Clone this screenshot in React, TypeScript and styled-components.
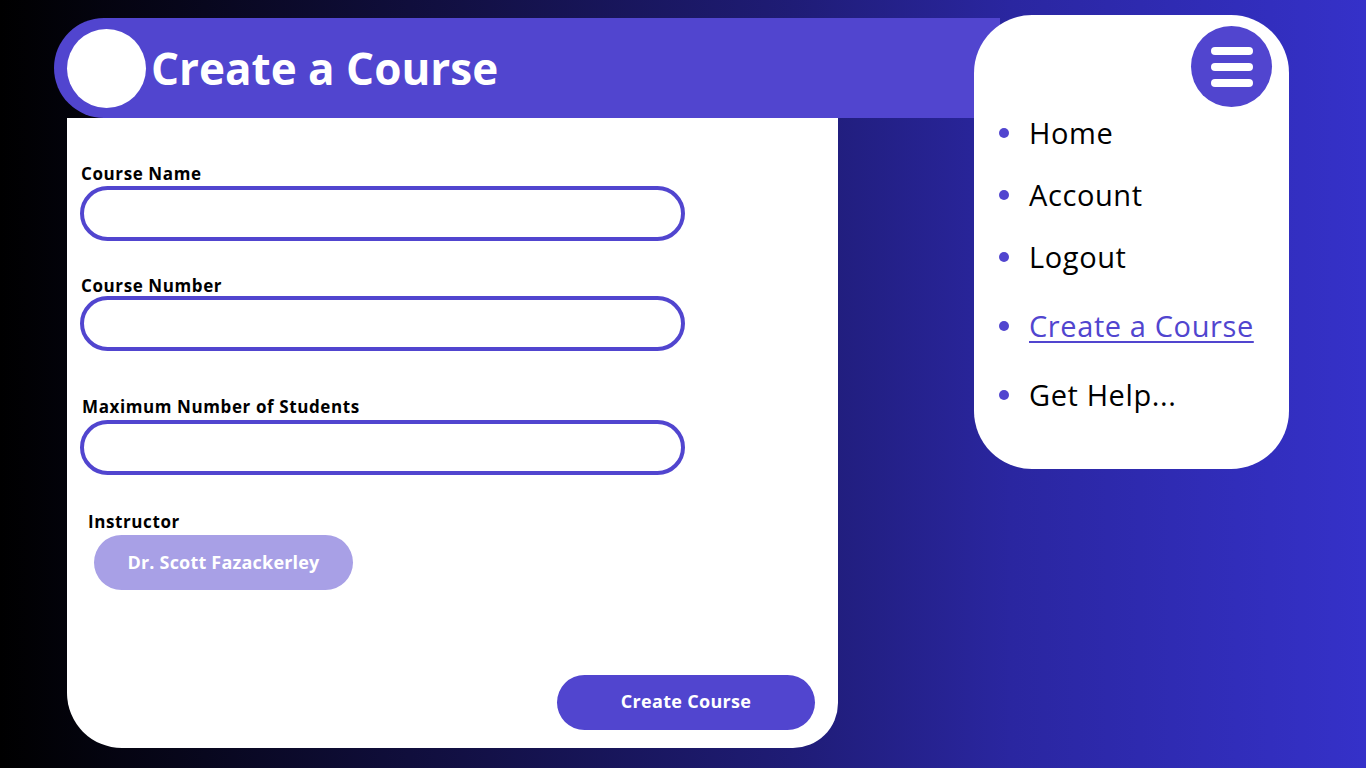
import React from "react";
import styled, { createGlobalStyle } from "styled-components";

const PURPLE = "#5145cf";

const GlobalStyle = createGlobalStyle`
  html, body {
    margin: 0;
    padding: 0;
  }
  body {
    width: 1366px;
    height: 768px;
    overflow: hidden;
    background: linear-gradient(90deg, #000000 0%, #100e3c 30%, #1f1c76 58%, #2a26a0 74%, #3531c9 100%);
    font-family: "Open Sans", "Noto Sans", sans-serif;
  }
  * { box-sizing: border-box; }
`;

const Page = styled.div`
  display: flex;
  align-items: flex-start;
  padding: 15px 0 0 54px;
  height: 768px;
`;

const LeftColumn = styled.div`
  width: 946px;
  margin-top: 3px;
  display: flex;
  flex-direction: column;
`;

const Header = styled.header`
  height: 100px;
  background: ${PURPLE};
  border-radius: 50px 0 0 50px;
  display: flex;
  align-items: center;
  padding-left: 13px;
  gap: 5px;
`;

const Avatar = styled.div`
  width: 79px;
  height: 79px;
  border-radius: 50%;
  background: #ffffff;
  flex: none;
`;

const Title = styled.h1`
  margin: 0;
  color: #ffffff;
  font-family: "Open Sans", sans-serif;
  font-weight: 700;
  font-size: 44px;
  line-height: 1;
`;

const Card = styled.main`
  margin-left: 13px;
  width: 771px;
  height: 630px;
  background: #ffffff;
  border-radius: 0 0 45px 55px;
  display: flex;
  flex-direction: column;
  padding: 0 23px 18px 13px;
`;

const Field = styled.div<{ $top: number }>`
  display: flex;
  flex-direction: column;
  align-items: flex-start;
  margin-top: ${(p) => p.$top}px;
`;

const Label = styled.label<{ $indent: number; $gap: number }>`
  display: block;
  font-family: "Open Sans", sans-serif;
  font-weight: 700;
  font-size: 17px;
  letter-spacing: 0.6px;
  line-height: 20px;
  color: #000000;
  margin-left: ${(p) => p.$indent}px;
  margin-bottom: ${(p) => p.$gap}px;
`;

const Input = styled.input`
  width: 605px;
  height: 55px;
  border: 4px solid ${PURPLE};
  border-radius: 28px;
  background: #ffffff;
  outline: none;
  padding: 0 24px;
  font-family: "Open Sans", sans-serif;
  font-size: 18px;
`;

const Pill = styled.div`
  margin-left: 14px;
  width: 259px;
  height: 55px;
  border-radius: 28px;
  background: #a8a0e6;
  color: #ffffff;
  display: flex;
  align-items: center;
  justify-content: center;
  padding-bottom: 2px;
  font-family: "Open Sans", sans-serif;
  font-weight: 700;
  font-size: 18px;
  letter-spacing: 0.2px;
`;

const SubmitButton = styled.button`
  margin-top: auto;
  align-self: flex-end;
  width: 258px;
  height: 55px;
  border: none;
  border-radius: 28px;
  background: ${PURPLE};
  color: #ffffff;
  padding: 0 0 4px 0;
  font-family: "Open Sans", sans-serif;
  font-weight: 700;
  font-size: 18px;
  letter-spacing: 0.3px;
  cursor: pointer;
`;

const NavPanel = styled.nav`
  position: relative;
  z-index: 1;
  margin-left: -26px;
  width: 315px;
  height: 454px;
  background: #ffffff;
  border-radius: 58px;
  display: flex;
  flex-direction: column;
  padding: 11px 17px 0 25px;
`;

const MenuButton = styled.button`
  align-self: flex-end;
  width: 81px;
  height: 81px;
  border-radius: 50%;
  border: none;
  background: ${PURPLE};
  display: flex;
  flex-direction: column;
  align-items: center;
  justify-content: center;
  gap: 8px;
  padding: 0;
`;

const MenuBar = styled.span`
  display: block;
  width: 42px;
  height: 8px;
  border-radius: 4px;
  background: #ffffff;
`;

const NavList = styled.ul`
  list-style: none;
  margin: 6px 0 0 0;
  padding: 0;
`;

const NavItem = styled.li<{ $top: number }>`
  display: flex;
  align-items: center;
  gap: 20px;
  height: 40px;
  margin-top: ${(p) => p.$top}px;
  &::before {
    content: "";
    width: 10px;
    height: 10px;
    border-radius: 50%;
    background: ${PURPLE};
    flex: none;
  }
`;

const NavLink = styled.a<{ $active?: boolean }>`
  font-family: "Open Sans", "Noto Sans", sans-serif;
  font-weight: 400;
  font-size: 29px;
  letter-spacing: 0.6px;
  line-height: 40px;
  color: ${(p) => (p.$active ? PURPLE : "#000000")};
  text-decoration: ${(p) => (p.$active ? "underline" : "none")};
  text-decoration-thickness: 2px;
  text-underline-offset: 4px;
  cursor: pointer;
`;

const navItems = [
  { label: "Home", top: 0 },
  { label: "Account", top: 22 },
  { label: "Logout", top: 22 },
  { label: "Create a Course", top: 29, active: true },
  { label: "Get Help...", top: 29 },
];

export default function App() {
  return (
    <>
      <GlobalStyle />
      <Page>
        <LeftColumn>
          <Header>
            <Avatar />
            <Title>Create a Course</Title>
          </Header>
          <Card>
            <Field $top={46}>
              <Label $indent={1} $gap={2}>Course Name</Label>
              <Input type="text" />
            </Field>
            <Field $top={35}>
              <Label $indent={1} $gap={0}>Course Number</Label>
              <Input type="text" />
            </Field>
            <Field $top={46}>
              <Label $indent={2} $gap={3}>Maximum Number of Students</Label>
              <Input type="text" />
            </Field>
            <Field $top={37}>
              <Label $indent={8} $gap={3}>Instructor</Label>
              <Pill>Dr. Scott Fazackerley</Pill>
            </Field>
            <SubmitButton type="button">Create Course</SubmitButton>
          </Card>
        </LeftColumn>
        <NavPanel>
          <MenuButton type="button" aria-label="Menu">
            <MenuBar />
            <MenuBar />
            <MenuBar />
          </MenuButton>
          <NavList>
            {navItems.map((item) => (
              <NavItem key={item.label} $top={item.top}>
                <NavLink $active={item.active}>{item.label}</NavLink>
              </NavItem>
            ))}
          </NavList>
        </NavPanel>
      </Page>
    </>
  );
}
